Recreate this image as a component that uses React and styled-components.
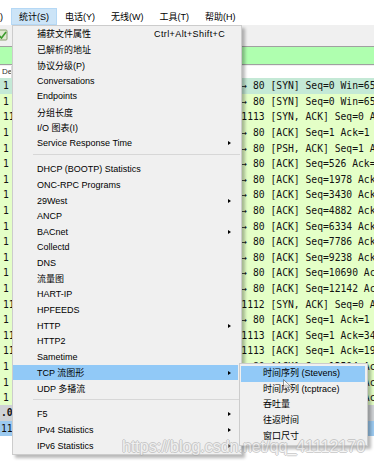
import React from "react";
import styled, { createGlobalStyle, css } from "styled-components";

const GlobalStyle = createGlobalStyle`
  html, body {
    margin: 0;
    padding: 0;
    background: #fff;
    overflow: hidden;
  }
  body {
    font-family: "Liberation Sans", "Noto Sans CJK SC", sans-serif;
    color: #000;
  }
`;

const Window = styled.div`
  position: relative;
  width: 374px;
  height: 462px;
  overflow: hidden;
  background: #fff;
`;

const MenuBar = styled.div`
  display: flex;
  align-items: flex-end;
  height: 25px;
  background: #fff;
  font-size: 9px;
  white-space: nowrap;
`;

const MenuBarItem = styled.div`
  height: 17px;
  line-height: 17px;
  padding: 0 7px;
  border: 1px solid transparent;
  box-sizing: border-box;
  ${(p) =>
    p.$active &&
    css`
      background: #cce4f7;
      border-color: #b5d8f5;
    `}
  &:first-child {
    margin-left: -35px;
  }
`;

const ToolBar = styled.div`
  display: flex;
  align-items: center;
  height: 20px;
  background: #f0f0f0;
`;

const ToolIcon = styled.svg`
  margin-left: -5px;
  width: 14px;
  height: 14px;
`;

const FilterBar = styled.div`
  padding: 1px 0;
  background: #f0f0f0;
`;

const FilterInput = styled.div`
  height: 17px;
  background: #afffaf;
  border-top: 1px solid #a0a0a0;
  border-bottom: 1px solid #a0a0a0;
`;

const ListHeader = styled.div`
  display: flex;
  height: 12px;
  background: #fff;
  font-size: 8px;
  color: #333;
`;

const HeaderCell = styled.div`
  width: 9px;
  padding-left: 2px;
  line-height: 12px;
  overflow: hidden;
  white-space: nowrap;
  border-right: 1px solid #dcdcdc;
`;

const PacketRow = styled.div`
  display: grid;
  grid-template-columns: 12px 200.2px 1fr;
  height: 15.6px;
  align-items: center;
  background: ${(p) => (p.$first ? "#c4e9d6" : "#e4ffc7")};
  font-family: "DejaVu Sans Mono", "Liberation Mono", monospace;
  font-size: 9.7px;
  color: #111;
  white-space: nowrap;
`;

const NoCell = styled.div`
  padding-left: 3px;
  overflow: hidden;
`;

const InfoCell = styled.div`
  grid-column: 3;
  overflow: hidden;
`;

const PaneRow = styled.div`
  height: ${(p) => p.$h}px;
  line-height: ${(p) => p.$h}px;
  padding-left: 1px;
  background: ${(p) => p.$bg};
  font-family: "DejaVu Sans Mono", "Liberation Mono", monospace;
  font-size: 9.7px;
  font-weight: ${(p) => (p.$bold ? 700 : 400)};
  color: #111;
`;

const Dropdown = styled.div`
  position: absolute;
  left: 12px;
  top: 25px;
  width: 230px;
  box-sizing: border-box;
  border: 1px solid #cccccc;
  background: #f0f0f0;
  padding: 0 0 1px;
  box-shadow: 3px 3px 3px rgba(0, 0, 0, 0.28);
  font-size: 9px;
  white-space: nowrap;
`;

const MenuItem = styled.div`
  display: grid;
  grid-template-columns: 117px 1fr 10px;
  align-items: center;
  height: 15.65px;
  margin-right: 3px;
  padding-left: 24px;
  background: ${(p) => (p.$active ? "#91c9f7" : "transparent")};
`;

const Shortcut = styled.span`
  letter-spacing: 0.4px;
`;

const SubArrow = styled.span`
  width: 0;
  height: 0;
  border-top: 2.5px solid transparent;
  border-bottom: 2.5px solid transparent;
  border-left: 3px solid #000;
`;

const Separator = styled.div`
  box-sizing: border-box;
  height: 10.35px;
  padding-top: 3px;
  margin: 0 1px 0 20px;
  &::before {
    content: "";
    display: block;
    border-top: 1px solid #d7d7d7;
  }
`;

const SubMenu = styled.div`
  position: absolute;
  left: 239px;
  top: 363px;
  width: 129px;
  box-sizing: border-box;
  border: 1px solid #cccccc;
  background: #f0f0f0;
  padding: 2px 0 1px;
  box-shadow: 3px 3px 3px rgba(0, 0, 0, 0.28);
  font-size: 9px;
  white-space: nowrap;
`;

const SubItem = styled.div`
  height: 15.65px;
  line-height: 15.65px;
  margin: 0 2px 0 1px;
  padding-left: 22px;
  background: ${(p) => (p.$active ? "#91c9f7" : "transparent")};
`;

const Cursor = styled.svg`
  position: absolute;
  left: 283px;
  top: 379px;
  width: 10px;
  height: 14px;
  opacity: 0.75;
`;

const Watermark = styled.div`
  position: absolute;
  left: 122px;
  top: 438px;
  font-family: "Liberation Sans", sans-serif;
  font-size: 16px;
  color: rgba(255, 255, 255, 0.85);
  text-shadow: 1px 0 #a8a8a8, -1px 0 #a8a8a8, 0 1px #a8a8a8, 0 -1px #a8a8a8;
  opacity: 0.55;
  white-space: nowrap;
`;

const menus = ["分析(A)", "统计(S)", "电话(Y)", "无线(W)", "工具(T)", "帮助(H)"];

const packets = [
  ["1", "1112 → 80 [SYN] Seq=0 Win=65535 Len=0 MSS=1460"],
  ["1", "1113 → 80 [SYN] Seq=0 Win=65535 Len=0 MSS=1460"],
  ["11", "80 → 1113 [SYN, ACK] Seq=0 Ack=1 Win=5840 Len=0"],
  ["1", "1113 → 80 [ACK] Seq=1 Ack=1 Win=65535 Len=0"],
  ["1", "1113 → 80 [PSH, ACK] Seq=1 Ack=1 Win=65535 Len=525"],
  ["1", "1113 → 80 [ACK] Seq=526 Ack=1 Win=65535 Len=1452"],
  ["1", "1113 → 80 [ACK] Seq=1978 Ack=1 Win=65535 Len=1452"],
  ["1", "1113 → 80 [ACK] Seq=3430 Ack=1 Win=65535 Len=1452"],
  ["1", "1113 → 80 [ACK] Seq=4882 Ack=1 Win=65535 Len=1452"],
  ["1", "1113 → 80 [ACK] Seq=6334 Ack=1 Win=65535 Len=1452"],
  ["1", "1113 → 80 [ACK] Seq=7786 Ack=1 Win=65535 Len=1452"],
  ["1", "1113 → 80 [ACK] Seq=9238 Ack=1 Win=65535 Len=1452"],
  ["1", "1113 → 80 [ACK] Seq=10690 Ack=1 Win=65535 Len=1452"],
  ["1", "1113 → 80 [ACK] Seq=12142 Ack=1 Win=65535 Len=1452"],
  ["11", "80 → 1112 [SYN, ACK] Seq=0 Ack=1 Win=5840 Len=0"],
  ["1", "1112 → 80 [ACK] Seq=1 Ack=1 Win=65535 Len=0"],
  ["11", "80 → 1113 [ACK] Seq=1 Ack=3430 Win=8712 Len=0"],
  ["11", "80 → 1113 [ACK] Seq=1 Ack=1978 Win=11616 Len=0"],
  ["1", "1113 → 80 [ACK] Seq=13594 Ack=1 Win=65535 Len=1452"],
  ["1", "1113 → 80 [ACK] Seq=15046 Ack=1 Win=65535 Len=1452"],
  ["1", "1113 → 80 [ACK] Seq=16498 Ack=1 Win=65535 Len=1452"],
];

const statsItems = [
  { label: "捕获文件属性", shortcut: "Ctrl+Alt+Shift+C" },
  { label: "已解析的地址" },
  { label: "协议分级(P)" },
  { label: "Conversations" },
  { label: "Endpoints" },
  { label: "分组长度" },
  { label: "I/O 图表(I)" },
  { label: "Service Response Time", sub: true },
  { sep: true },
  { label: "DHCP (BOOTP) Statistics" },
  { label: "ONC-RPC Programs" },
  { label: "29West", sub: true },
  { label: "ANCP" },
  { label: "BACnet", sub: true },
  { label: "Collectd" },
  { label: "DNS" },
  { label: "流量图" },
  { label: "HART-IP" },
  { label: "HPFEEDS" },
  { label: "HTTP", sub: true },
  { label: "HTTP2" },
  { label: "Sametime" },
  { label: "TCP 流图形", sub: true, active: true },
  { label: "UDP 多播流" },
  { sep: true },
  { label: "F5", sub: true },
  { label: "IPv4 Statistics", sub: true },
  { label: "IPv6 Statistics", sub: true },
];

const tcpGraphs = ["时间序列 (Stevens)", "时间序列 (tcptrace)", "吞吐量", "往返时间", "窗口尺寸"];

export default function App() {
  return (
    <Window>
      <GlobalStyle />
      <MenuBar>
        {menus.map((m) => (
          <MenuBarItem key={m} $active={m === "统计(S)"}>
            {m}
          </MenuBarItem>
        ))}
      </MenuBar>
      <ToolBar>
        <ToolIcon viewBox="0 0 14 14">
          <rect x="1" y="2" width="11" height="10" rx="1" fill="#dfe8d0" stroke="#8aa070" />
          <path d="M4 7.5 L6.5 10 L11 4" fill="none" stroke="#3c9a2c" strokeWidth="1.6" />
        </ToolIcon>
      </ToolBar>
      <FilterBar>
        <FilterInput />
      </FilterBar>
      <ListHeader>
        <HeaderCell>De</HeaderCell>
      </ListHeader>
      {packets.map(([no, info], i) => (
        <PacketRow key={i} $first={i === 0}>
          <NoCell>{no}</NoCell>
          <InfoCell>{info}</InfoCell>
        </PacketRow>
      ))}
      <PaneRow $h={16} $bg="#cfd2d5" $bold>
        .0
      </PaneRow>
      <PaneRow $h={15} $bg="#9ccaf0">
        11
      </PaneRow>

      <Dropdown>
        {statsItems.map((it, i) =>
          it.sep ? (
            <Separator key={i} />
          ) : (
            <MenuItem key={i} $active={it.active}>
              <span>{it.label}</span>
              <Shortcut>{it.shortcut}</Shortcut>
              {it.sub ? <SubArrow /> : <span />}
            </MenuItem>
          )
        )}
      </Dropdown>

      <SubMenu>
        {tcpGraphs.map((g, i) => (
          <SubItem key={g} $active={i === 0}>
            {g}
          </SubItem>
        ))}
      </SubMenu>

      <Cursor viewBox="0 0 10 14">
        <path
          d="M0.5 0.5 L0.5 11 L3 8.6 L4.8 12.8 L6.6 12 L4.8 8 L8.2 8 Z"
          fill="#fff"
          stroke="#555"
          strokeWidth="0.8"
        />
      </Cursor>

      <Watermark>https://blog.csdn.net/qq_41112170</Watermark>
    </Window>
  );
}
